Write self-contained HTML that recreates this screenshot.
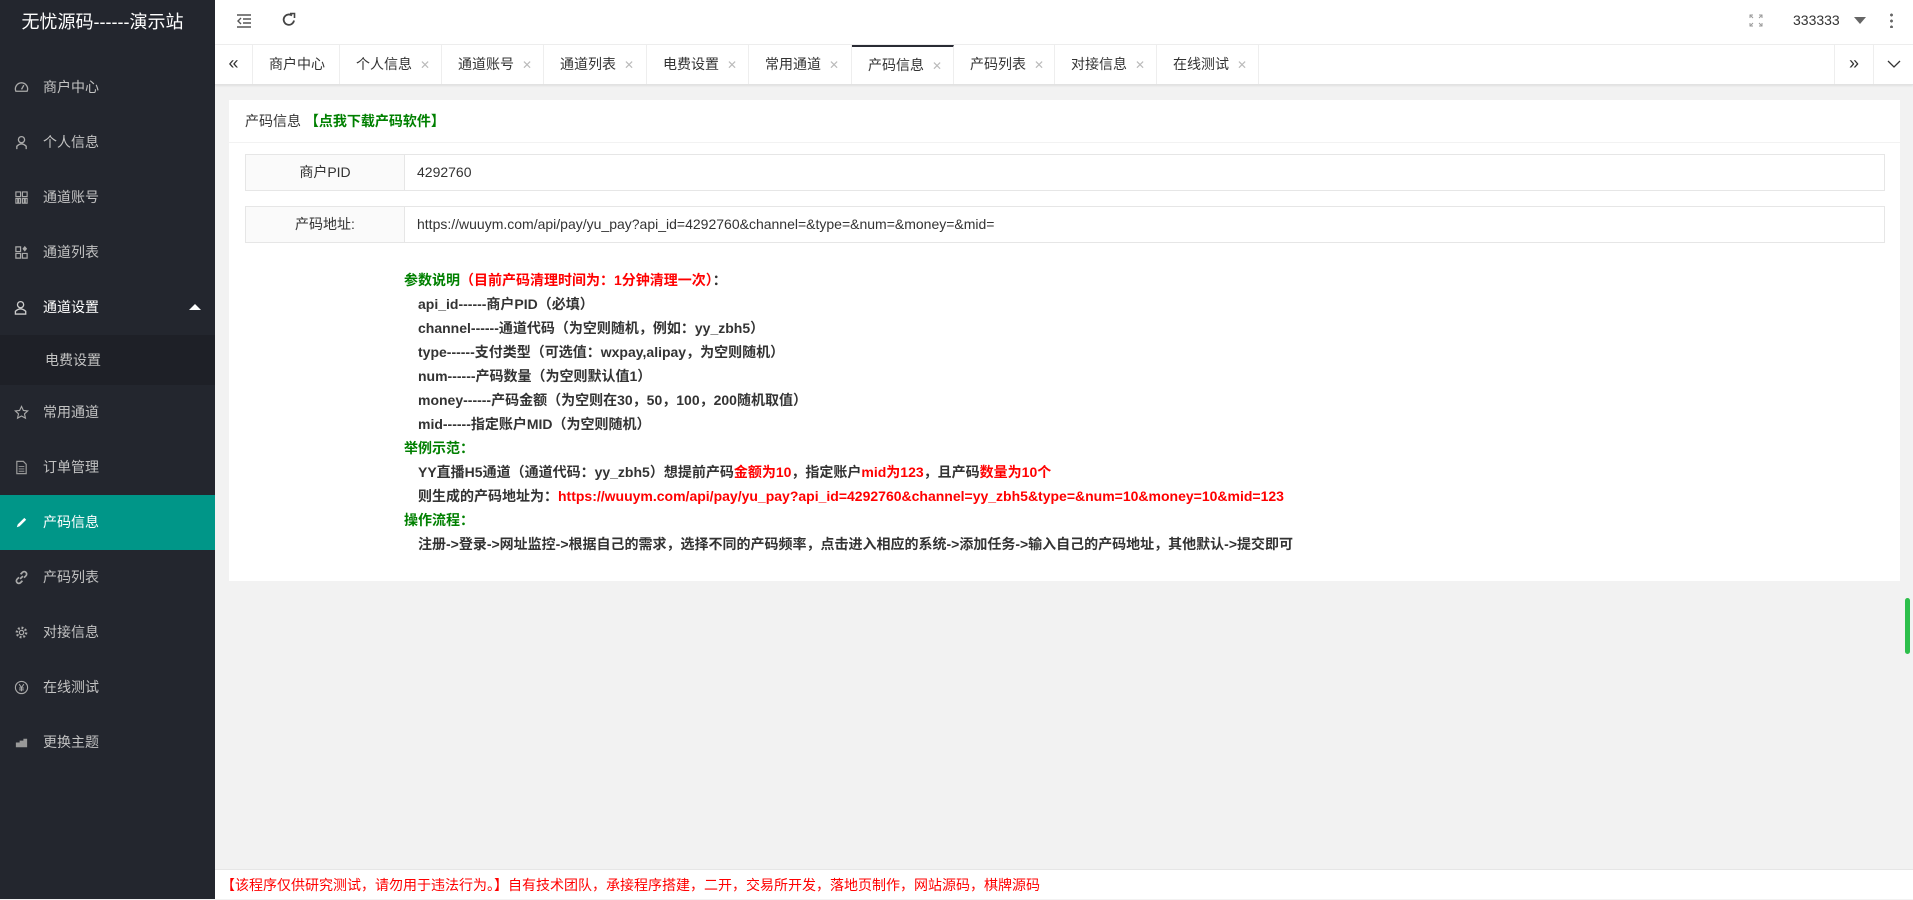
<!DOCTYPE html>
<html><head><meta charset="utf-8"><style>
*{margin:0;padding:0;box-sizing:border-box}
body{width:1913px;height:899px;overflow:hidden;background:#f2f2f2;font-family:"Liberation Sans","Noto Sans CJK SC",sans-serif;position:relative;font-size:14px;color:#333}
.side{position:absolute;left:0;top:0;width:215px;height:899px;background:#23262e}
.logo{height:45px;line-height:44px;color:#fff;font-size:18px;text-align:center;padding-right:10px}
.mi{position:absolute;left:0;width:215px;height:55px;line-height:55px;color:#c2c2c2;font-size:14px;padding-left:43px}
.mi .ic{position:absolute;left:14px;top:20px;width:15px;height:15px}
.mi.act{background:#009688;color:#fff}
.mi.sub{background:#1e2027;height:50px;line-height:50px;padding-left:45px}
.hd{position:absolute;left:215px;top:0;right:0;height:45px;background:#fff;border-bottom:1px solid #eee}
.tabs{position:absolute;left:215px;top:45px;right:0;height:40px;background:#fff;border-bottom:1px solid #e2e2e2;box-shadow:0 1px 2px rgba(0,0,0,.08)}
.tab{position:absolute;top:0;height:39px;line-height:39px;border-right:1px solid #eee;font-size:14px;color:#333;padding-left:16px}
.tab .x{color:#bbb;font-size:12px;margin-left:8px}
.tab.act{border-top:2px solid #292b34;line-height:36px}
.card{position:absolute;left:229px;top:100px;width:1671px;height:481px;background:#fff}
.ch{height:43px;line-height:43px;border-bottom:1px solid #f2f2f2;padding-left:16px;font-size:14px}
.row{position:absolute;left:16px;width:1640px;height:37px;border:1px solid #e6e6e6;line-height:35px;font-size:14px}
.row .l{position:absolute;left:0;top:0;width:159px;height:35px;background:#fafafa;border-right:1px solid #e6e6e6;text-align:center}
.row .v{position:absolute;left:171px}
.tx{position:absolute;left:175px;font-size:14px;font-weight:bold;color:#333;white-space:nowrap}
.g{color:#008000}.r{color:#f00}
.ft{position:absolute;left:215px;top:869px;right:0;height:30px;background:#fff;border-top:1px solid #e6e6e6;color:#f00;font-size:14px;line-height:30px;padding-left:6px}
</style></head><body>
<div class="side">
<div class="logo">无忧源码------演示站</div>
<div class="mi" style="top:60px"><svg class="ic" viewBox="0 0 16 16"><path d="M2 12A6.5 6.5 0 1 1 14 12Z" fill="none" stroke="#aaa" stroke-width="1.4"/><path d="M8 10L10.5 5.5" stroke="#aaa" stroke-width="1.4"/></svg>商户中心</div>
<div class="mi" style="top:115px"><svg class="ic" viewBox="0 0 16 16"><circle cx="8" cy="5" r="3.3" fill="none" stroke="#aaa" stroke-width="1.4"/><path d="M3 15V12Q8 7 13 12V15" fill="none" stroke="#aaa" stroke-width="1.4"/></svg>个人信息</div>
<div class="mi" style="top:170px"><svg class="ic" viewBox="0 0 16 16"><path d="M2 2h5v5H2zM9 2h5v5H9zM2 9h2v5H2zM5 9h2v5H5zM9 9h2v5H9zM12 9h2v5h-2z" fill="none" stroke="#aaa" stroke-width="1.2"/></svg>通道账号</div>
<div class="mi" style="top:225px"><svg class="ic" viewBox="0 0 16 16"><path d="M2 2h5v5H2zM2 9h5v5H2zM9 9h5v5H9z" fill="none" stroke="#aaa" stroke-width="1.3"/><path d="M11.5 1l2.5 3-2.5 3-2.5-3z" fill="#aaa"/></svg>通道列表</div>
<div class="mi" style="top:280px;color:#fff"><svg class="ic" viewBox="0 0 16 16"><circle cx="7" cy="5" r="3.3" fill="none" stroke="#ccc" stroke-width="1.4"/><path d="M1.5 15V12Q7 7 12.5 12V15Z" fill="none" stroke="#ccc" stroke-width="1.4"/></svg>通道设置<span style="position:absolute;right:14px;top:24px;border:6px solid transparent;border-bottom-color:#fff;border-top:0"></span></div>
<div class="mi sub" style="top:335px">电费设置</div>
<div class="mi" style="top:385px"><svg class="ic" viewBox="0 0 16 16"><path d="M8 1.5l2 4.3 4.6.5-3.4 3.1 1 4.6L8 11.7 3.8 14l1-4.6L1.4 6.3l4.6-.5z" fill="none" stroke="#aaa" stroke-width="1.2"/></svg>常用通道</div>
<div class="mi" style="top:440px"><svg class="ic" viewBox="0 0 16 16"><path d="M3 1.5h7l3 3V14.5H3z" fill="none" stroke="#999" stroke-width="1.3"/><path d="M5 7h6M5 9.5h6M5 12h6" stroke="#999"/></svg>订单管理</div>
<div class="mi act" style="top:495px"><svg class="ic" viewBox="0 0 16 16"><path d="M3 13l1-3 7-7 2 2-7 7z" fill="#fff"/></svg>产码信息</div>
<div class="mi" style="top:550px"><svg class="ic" viewBox="0 0 16 16"><path d="M6.5 9.5l3-3M7 4.5l2-2a2.6 2.6 0 0 1 3.7 3.7l-2 2M9 11.5l-2 2a2.6 2.6 0 0 1-3.7-3.7l2-2" fill="none" stroke="#aaa" stroke-width="1.8"/></svg>产码列表</div>
<div class="mi" style="top:605px"><svg class="ic" viewBox="0 0 16 16"><circle cx="8" cy="8" r="2.3" fill="none" stroke="#aaa" stroke-width="1.3"/><circle cx="8" cy="8" r="5" fill="none" stroke="#aaa" stroke-width="2.5" stroke-dasharray="2 1.9"/></svg>对接信息</div>
<div class="mi" style="top:660px"><svg class="ic" viewBox="0 0 16 16"><circle cx="8" cy="8" r="6.5" fill="none" stroke="#aaa" stroke-width="1.2"/><path d="M5.5 4.5L8 8l2.5-3.5M8 8v4M5.5 8.5h5M5.5 10.5h5" fill="none" stroke="#aaa" stroke-width="1.1"/></svg>在线测试</div>
<div class="mi" style="top:715px"><svg class="ic" viewBox="0 0 16 16"><path d="M2 8h4v5H2zM6 6h4v7H6zM10 4h4v9h-4z" fill="#999"/></svg>更换主题</div>
</div>

<div class="hd">
<svg style="position:absolute;left:21px;top:14px" width="16" height="14" viewBox="0 0 16 14"><path d="M1 1h14M7 5h8M7 9h8M1 13h14" stroke="#555" stroke-width="1.6"/><path d="M5 4L2 7l3 3" fill="none" stroke="#555" stroke-width="1.4"/></svg>
<svg style="position:absolute;left:66px;top:12px" width="16" height="16" viewBox="0 0 16 16"><path d="M13 8.5A5.2 5.2 0 1 1 11 3.5" fill="none" stroke="#444" stroke-width="1.8"/><path d="M9 1.5h4.5V6" fill="none" stroke="#444" stroke-width="1.6"/></svg>
<svg style="position:absolute;left:1534px;top:14px" width="14" height="13" viewBox="0 0 14 13"><path d="M1 4V1h3M10 1h3v3M13 9v3h-3M4 12H1V9M1 1l3 3M13 1l-3 3M13 12l-3-3M1 12l3-3" fill="none" stroke="#999" stroke-width="1"/></svg>
<span style="position:absolute;left:1578px;top:12px;font-size:14px;color:#333">333333</span>
<span style="position:absolute;left:1639px;top:17px;border:6px solid transparent;border-top:7px solid #666;border-bottom:0"></span>
<span style="position:absolute;left:1675px;top:12px;width:3px;height:16px;background:radial-gradient(circle,#666 1.3px,transparent 1.6px) 0 0/3px 6px"></span>
</div>

<div class="tabs">
<div class="tab" style="left:0;width:38px;padding:0;text-align:center;font-size:18px;line-height:36px">«</div>
<div class="tab" style="left:38px;width:87px">商户中心</div>
<div class="tab" style="left:125px;width:102px">个人信息<span class="x">✕</span></div>
<div class="tab" style="left:227px;width:102px">通道账号<span class="x">✕</span></div>
<div class="tab" style="left:329px;width:103px">通道列表<span class="x">✕</span></div>
<div class="tab" style="left:432px;width:102px">电费设置<span class="x">✕</span></div>
<div class="tab" style="left:534px;width:103px">常用通道<span class="x">✕</span></div>
<div class="tab act" style="left:637px;width:102px">产码信息<span class="x">✕</span></div>
<div class="tab" style="left:739px;width:101px">产码列表<span class="x">✕</span></div>
<div class="tab" style="left:840px;width:102px">对接信息<span class="x">✕</span></div>
<div class="tab" style="left:942px;width:102px">在线测试<span class="x">✕</span></div>
<div class="tab" style="left:1619px;width:40px;padding:0;text-align:center;border-left:1px solid #eee;font-size:18px;line-height:36px">»</div>
<div class="tab" style="left:1659px;width:39px;padding:0;text-align:center;border:0"><svg width="14" height="9" viewBox="0 0 14 9" style="margin-top:15px"><path d="M1 1l6 6 6-6" fill="none" stroke="#333" stroke-width="1.3"/></svg></div>
</div>

<div class="card">
<div class="ch">产码信息 <b class="g">【点我下载产码软件】</b></div>
<div class="row" style="top:54px"><div class="l">商户PID</div><div class="v">4292760</div></div>
<div class="row" style="top:106px"><div class="l">产码地址:</div><div class="v">https://wuuym.com/api/pay/yu_pay?api_id=4292760&amp;channel=&amp;type=&amp;num=&amp;money=&amp;mid=</div></div>
<div class="tx" style="top:170px"><span class="g">参数说明</span><span class="r">（目前产码清理时间为：1分钟清理一次）</span>：</div>
<div class="tx" style="top:194px;left:189px">api_id------商户PID（必填）</div>
<div class="tx" style="top:218px;left:189px">channel------通道代码（为空则随机，例如：yy_zbh5）</div>
<div class="tx" style="top:242px;left:189px">type------支付类型（可选值：wxpay,alipay，为空则随机）</div>
<div class="tx" style="top:266px;left:189px">num------产码数量（为空则默认值1）</div>
<div class="tx" style="top:290px;left:189px">money------产码金额（为空则在30，50，100，200随机取值）</div>
<div class="tx" style="top:314px;left:189px">mid------指定账户MID（为空则随机）</div>
<div class="tx g" style="top:338px">举例示范：</div>
<div class="tx" style="top:362px;left:189px">YY直播H5通道（通道代码：yy_zbh5）想提前产码<span class="r">金额为10</span>，指定账户<span class="r">mid为123</span>，且产码<span class="r">数量为10个</span></div>
<div class="tx" style="top:386px;left:189px">则生成的产码地址为：<span class="r">https://wuuym.com/api/pay/yu_pay?api_id=4292760&amp;channel=yy_zbh5&amp;type=&amp;num=10&amp;money=10&amp;mid=123</span></div>
<div class="tx g" style="top:410px">操作流程：</div>
<div class="tx" style="top:434px;left:189px">注册-&gt;登录-&gt;网址监控-&gt;根据自己的需求，选择不同的产码频率，点击进入相应的系统-&gt;添加任务-&gt;输入自己的产码地址，其他默认-&gt;提交即可</div>
</div>

<div style="position:absolute;left:1905px;top:598px;width:5px;height:56px;border-radius:3px;background:#2dbf4b"></div>
<div class="ft">【该程序仅供研究测试，请勿用于违法行为。】自有技术团队，承接程序搭建，二开，交易所开发，落地页制作，网站源码，棋牌源码</div>
</body></html>
